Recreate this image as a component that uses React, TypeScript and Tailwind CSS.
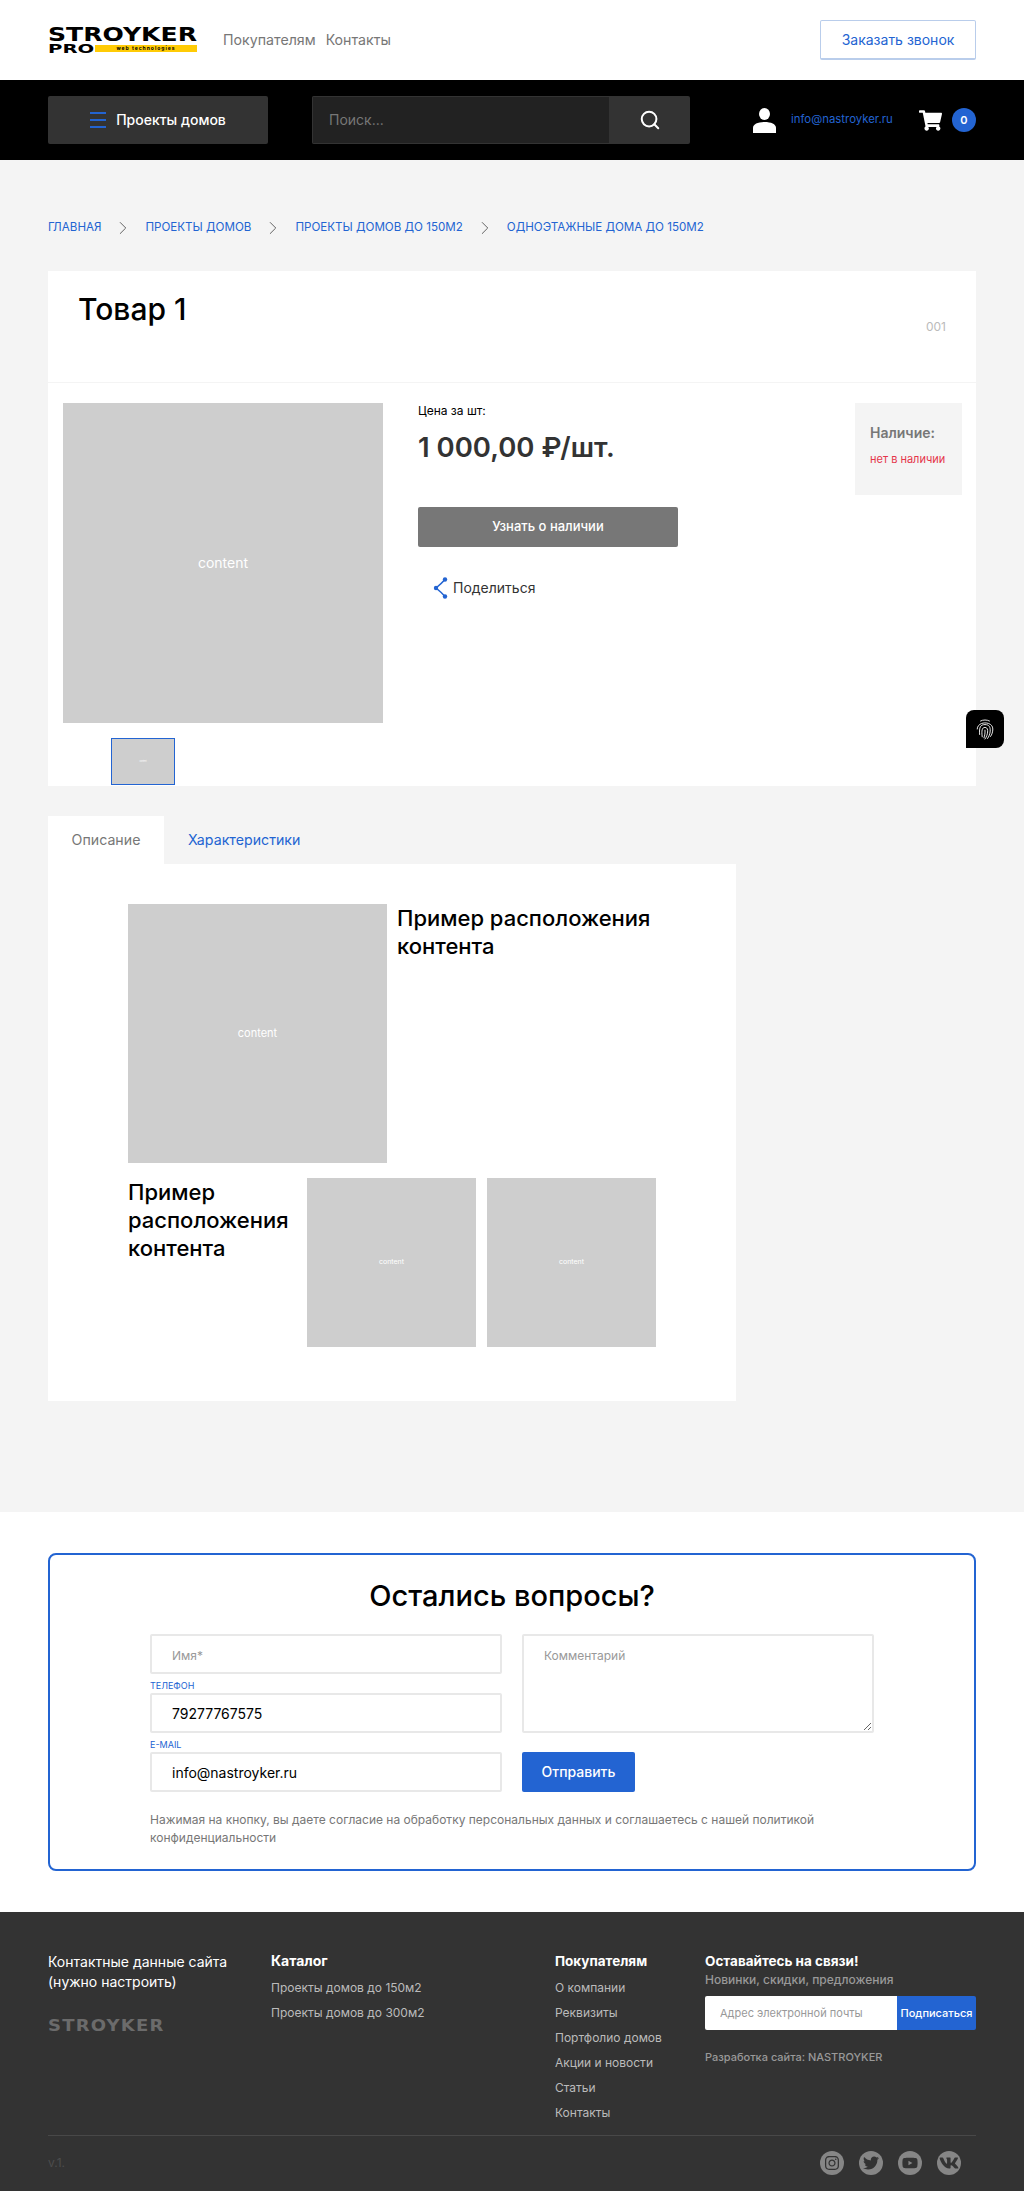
import React from 'react';
import { FaInstagram, FaTwitter, FaYoutube, FaVk, FaShoppingCart } from 'react-icons/fa';
import { Search, ChevronRight } from 'lucide-react';

const crumbs = ['Главная', 'Проекты домов', 'Проекты домов до 150м2', 'Одноэтажные дома до 150м2'];
const buyers = ['О компании', 'Реквизиты', 'Портфолио домов', 'Акции и новости', 'Статьи', 'Контакты'];

const Logo = () => (
  <div className="w-[149px] select-none">
    <div className="origin-left text-[19px] leading-[16px] font-bold text-black whitespace-nowrap scale-x-[1.32] font-['DejaVu_Sans']">STROYKER</div>
    <div className="flex items-center mt-[1px]">
      <span className="w-[47px] origin-left text-[12.5px] leading-[11px] font-bold text-black scale-x-[1.57] font-['DejaVu_Sans']">PRO</span>
      <span className="flex-1 h-[7px] bg-[#ffcb05] text-[5px] leading-[7px] font-bold tracking-[1px] text-black text-center">web technologies</span>
    </div>
  </div>
);

const Field = ({ placeholder, value }: { placeholder?: string; value?: string }) => (
  <input
    readOnly
    placeholder={placeholder}
    value={value ?? ''}
    className="w-full h-10 px-5 border-2 border-[#e8e8e8] rounded-[2px] bg-white text-sm text-black placeholder:text-xs placeholder:text-[#999] outline-none"
  />
);

const App = () => {
  return (
    <div className="relative min-h-screen bg-white font-['Inter',sans-serif] text-black">
      <header className="h-20 px-12 flex items-center justify-between">
        <div className="flex items-center">
          <Logo />
          <nav className="flex gap-[10px] ml-[26px] text-[14.2px] text-[#777]">
            <a>Покупателям</a>
            <a>Контакты</a>
          </nav>
        </div>
        <button className="w-[156px] h-10 border border-b-2 border-[#b9cdeb] rounded-[2px] text-sm text-[#2364d2]">Заказать звонок</button>
      </header>

      <div className="h-20 bg-black px-12 flex items-center">
        <button className="w-[220px] h-12 shrink-0 bg-[#333] rounded-[2px] flex items-center justify-center gap-[10px] text-sm font-medium text-white">
          <span className="flex flex-col gap-[5px] w-4">
            <i className="h-[2px] bg-[#2364d2]" />
            <i className="h-[2px] bg-[#2364d2]" />
            <i className="h-[2px] bg-[#2364d2]" />
          </span>
          Проекты домов
        </button>
        <div className="ml-[44px] w-[378px] h-12 shrink-0 flex rounded-[2px] overflow-hidden">
          <input readOnly placeholder="Поиск..." className="w-[298px] bg-[#222] border border-[#333] px-4 text-sm text-white placeholder:text-[#777] outline-none" />
          <div className="flex-1 bg-[#333] flex items-center justify-center">
            <Search size={22} strokeWidth={2.2} className="text-white" />
          </div>
        </div>
        <svg width="23" height="25" viewBox="0 0 23 25" className="ml-[63px] shrink-0 text-white" fill="currentColor">
          <ellipse cx="11.5" cy="6" rx="5.5" ry="6" />
          <path d="M0 25 V20 C0 16 5 14 11.5 14 C18 14 23 16 23 20 V25 Z" />
        </svg>
        <a className="ml-[15px] w-[102px] shrink-0 text-[11.4px] text-[#2364d2] whitespace-nowrap">info@nastroyker.ru</a>
        <FaShoppingCart size={23} className="ml-[26px] shrink-0 text-white" />
        <span className="ml-[10px] w-6 h-6 shrink-0 rounded-full bg-[#2364d2] text-white text-[11px] font-semibold flex items-center justify-center">0</span>
      </div>

      <main className="bg-[#f4f4f4] px-12 pt-[60px] pb-[111px]">
        <div className="flex items-center h-4 text-[11.6px] uppercase text-[#2364d2]">
          {crumbs.map((c, i) => (
            <React.Fragment key={c}>
              {i > 0 && <ChevronRight size={22} strokeWidth={1} className="mx-[11px] text-[#555]" />}
              <a>{c}</a>
            </React.Fragment>
          ))}
        </div>

        <section className="mt-[35px] bg-white">
          <div className="h-[112px] px-[30px] border-b border-[#f4f4f4] flex justify-between">
            <h1 className="mt-[18px] text-[30px] leading-10 font-medium">Товар 1</h1>
            <span className="mt-[48px] text-xs text-[#bbb]">001</span>
          </div>
          <div className="pl-[15px] pr-[14px] pt-5 pb-[1px] flex">
            <div className="w-[320px]">
              <div className="h-[320px] bg-[#cecece] flex items-center justify-center text-sm text-white">content</div>
              <div className="mt-[15px] ml-[48px] w-16 h-[47px] bg-[#cecece] border border-[#2364d2] flex items-center justify-center text-[2px] text-white">content</div>
            </div>
            <div className="ml-[35px] w-[260px]">
              <p className="text-xs leading-4">Цена за шт:</p>
              <p className="mt-[10px] text-[27.5px] leading-9 font-semibold text-[#333] whitespace-nowrap">1 000,00 ₽/шт.</p>
              <button className="mt-[42px] w-full h-10 bg-[#777] rounded-[2px] text-white text-[13px] font-medium">Узнать о наличии</button>
              <div className="mt-[30px] ml-[14px] flex items-center gap-[5px] text-sm text-[#333]">
                <svg width="16" height="22" viewBox="0 0 16 22" fill="none" className="text-[#2364d2]">
                  <path d="M13 2.5 Q9 7 4 11 Q9 15 13 19.5" stroke="currentColor" strokeWidth="1.6" />
                  <circle cx="13" cy="2.5" r="2.2" fill="currentColor" />
                  <circle cx="4" cy="11" r="2.2" fill="currentColor" />
                  <circle cx="13" cy="19.5" r="2.2" fill="currentColor" />
                </svg>
                Поделиться
              </div>
            </div>
            <div className="ml-auto w-[107px] h-[92px] bg-[#f4f4f4] px-[15px] pt-5">
              <p className="text-sm leading-5 font-semibold text-[#777]">Наличие:</p>
              <p className="mt-2 text-[11px] leading-4 text-[#e5344a] whitespace-nowrap">нет в наличии</p>
            </div>
          </div>
        </section>

        <div className="mt-[30px] flex h-12 text-[14.2px]">
          <a className="w-[116px] bg-white flex items-center justify-center text-[#777]">Описание</a>
          <a className="px-6 flex items-center text-[#2364d2]">Характеристики</a>
        </div>
        <section className="w-[688px] h-[537px] bg-white pt-10 pl-20 pr-[60px]">
          <div className="flex gap-[10px]">
            <div className="w-[259px] h-[259px] shrink-0 bg-[#cecece] flex items-center justify-center text-[11px] text-white">content</div>
            <h2 className="text-[22px] leading-7 font-medium">Пример расположения контента</h2>
          </div>
          <div className="mt-[15px] flex">
            <h2 className="w-[179px] text-[22px] leading-7 font-medium">Пример расположения контента</h2>
            <div className="w-[169px] h-[169px] bg-[#cecece] flex items-center justify-center text-[7px] text-white">content</div>
            <div className="ml-[11px] w-[169px] h-[169px] bg-[#cecece] flex items-center justify-center text-[7px] text-white">content</div>
          </div>
        </section>
      </main>

      <section className="px-12 py-[41px]">
        <div className="h-[318px] border-2 border-[#2364d2] rounded-lg px-[100px] pt-[21px]">
          <h2 className="text-center text-[29px] leading-10 font-medium">Остались вопросы?</h2>
          <div className="mt-[18px] grid grid-cols-[352px_352px] gap-x-5">
            <div>
              <Field placeholder="Имя*" />
              <label className="block mt-[5px] text-[9px] leading-[14px] uppercase text-[#2364d2]">Телефон</label>
              <Field value="79277767575" />
              <label className="block mt-[5px] text-[9px] leading-[14px] uppercase text-[#2364d2]">E-mail</label>
              <Field value="info@nastroyker.ru" />
            </div>
            <div>
              <textarea readOnly placeholder="Комментарий" className="block w-full h-[99px] px-5 py-3 border-2 border-[#e8e8e8] rounded-[2px] text-xs placeholder:text-[#999] outline-none" />
              <button className="mt-[19px] w-[113px] h-10 bg-[#2364d2] rounded-[2px] text-white text-sm font-medium">Отправить</button>
            </div>
          </div>
          <p className="mt-[19px] w-[680px] text-xs leading-[18px] text-[#777]">Нажимая на кнопку, вы даете согласие на обработку персональных данных и соглашаетесь с нашей политикой конфиденциальности</p>
        </div>
      </section>

      <footer className="h-[279px] bg-[#333] px-12 pt-10">
        <div className="h-[184px] flex border-b border-[#484848]">
          <div className="w-[223px]">
            <p className="text-sm leading-5 text-white">Контактные данные сайта<br />(нужно настроить)</p>
            <div className="mt-[26px] origin-left scale-x-[1.2] text-[15px] leading-4 font-bold tracking-[1px] text-[#6b6b6b] font-['DejaVu_Sans']">STROYKER</div>
          </div>
          <div className="w-[284px]">
            <h4 className="-mt-[1px] text-sm leading-5 font-bold text-white">Каталог</h4>
            <ul className="mt-1 text-xs text-[#bbb]">
              <li className="h-[25px] flex items-center">Проекты домов до 150м2</li>
              <li className="h-[25px] flex items-center">Проекты домов до 300м2</li>
            </ul>
          </div>
          <div className="w-[150px]">
            <h4 className="-mt-[1px] text-[13.5px] leading-5 font-bold text-white">Покупателям</h4>
            <ul className="mt-1 text-xs text-[#bbb]">
              {buyers.map((b) => (
                <li key={b} className="h-[25px] flex items-center">{b}</li>
              ))}
            </ul>
          </div>
          <div className="flex-1">
            <h4 className="-mt-[1px] text-[13.5px] leading-5 font-bold text-white">Оставайтесь на связи!</h4>
            <p className="mt-[1px] text-xs leading-4 font-medium text-[#999]">Новинки, скидки, предложения</p>
            <div className="mt-2 h-[34px] flex rounded-[2px] overflow-hidden">
              <input readOnly placeholder="Адрес электронной почты" className="w-[192px] bg-white px-[15px] text-[11px] placeholder:text-[#999] outline-none" />
              <button className="flex-1 bg-[#2364d2] text-white text-[11px] font-medium whitespace-nowrap">Подписаться</button>
            </div>
            <p className="mt-[19px] text-[11px] leading-4 font-medium text-[#999]">Разработка сайта: NASTROYKER</p>
          </div>
        </div>
        <div className="mt-[15px] flex items-center justify-between pr-[15px]">
          <span className="text-xs text-[#4d4d4d]">v.1.</span>
          <div className="flex gap-[15px]">
            {[FaInstagram, FaTwitter, FaYoutube, FaVk].map((Icon, i) => (
              <span key={i} className="w-6 h-6 rounded-full bg-[#868686] flex items-center justify-center text-[#333]">
                <Icon size={i === 3 ? 20 : 16} />
              </span>
            ))}
          </div>
        </div>
      </footer>

      <div className="absolute left-[966px] top-[710px] w-[38px] h-[38px] bg-black rounded-[8px] rounded-bl-none flex items-center justify-center">
        <svg width="18" height="21" viewBox="0 0 18 21" fill="none" stroke="white" strokeWidth="0.9" strokeLinecap="round">
          <path d="M4.5 2 C7 .6 11 .6 13.5 2" />
          <path d="M1.2 10 C1.2 1.8 16.8 1.8 16.8 10 C16.8 13 16 15.5 14.5 17.5" />
          <path d="M3.6 15.5 C3 8 4.5 5.6 9 5.6 C13.5 5.6 14.4 8.5 14.2 12 C14 15 13 17.5 11.5 19.5" />
          <path d="M6.2 17.8 C5.4 11.5 6 8.4 9 8.4 C11.5 8.4 11.8 11 11.6 13 C11.4 15.5 10.5 18 9 20" />
          <path d="M9 11.2 C9.2 14 8.8 16.5 8 18.8" />
        </svg>
      </div>
    </div>
  );
};

export default App;
